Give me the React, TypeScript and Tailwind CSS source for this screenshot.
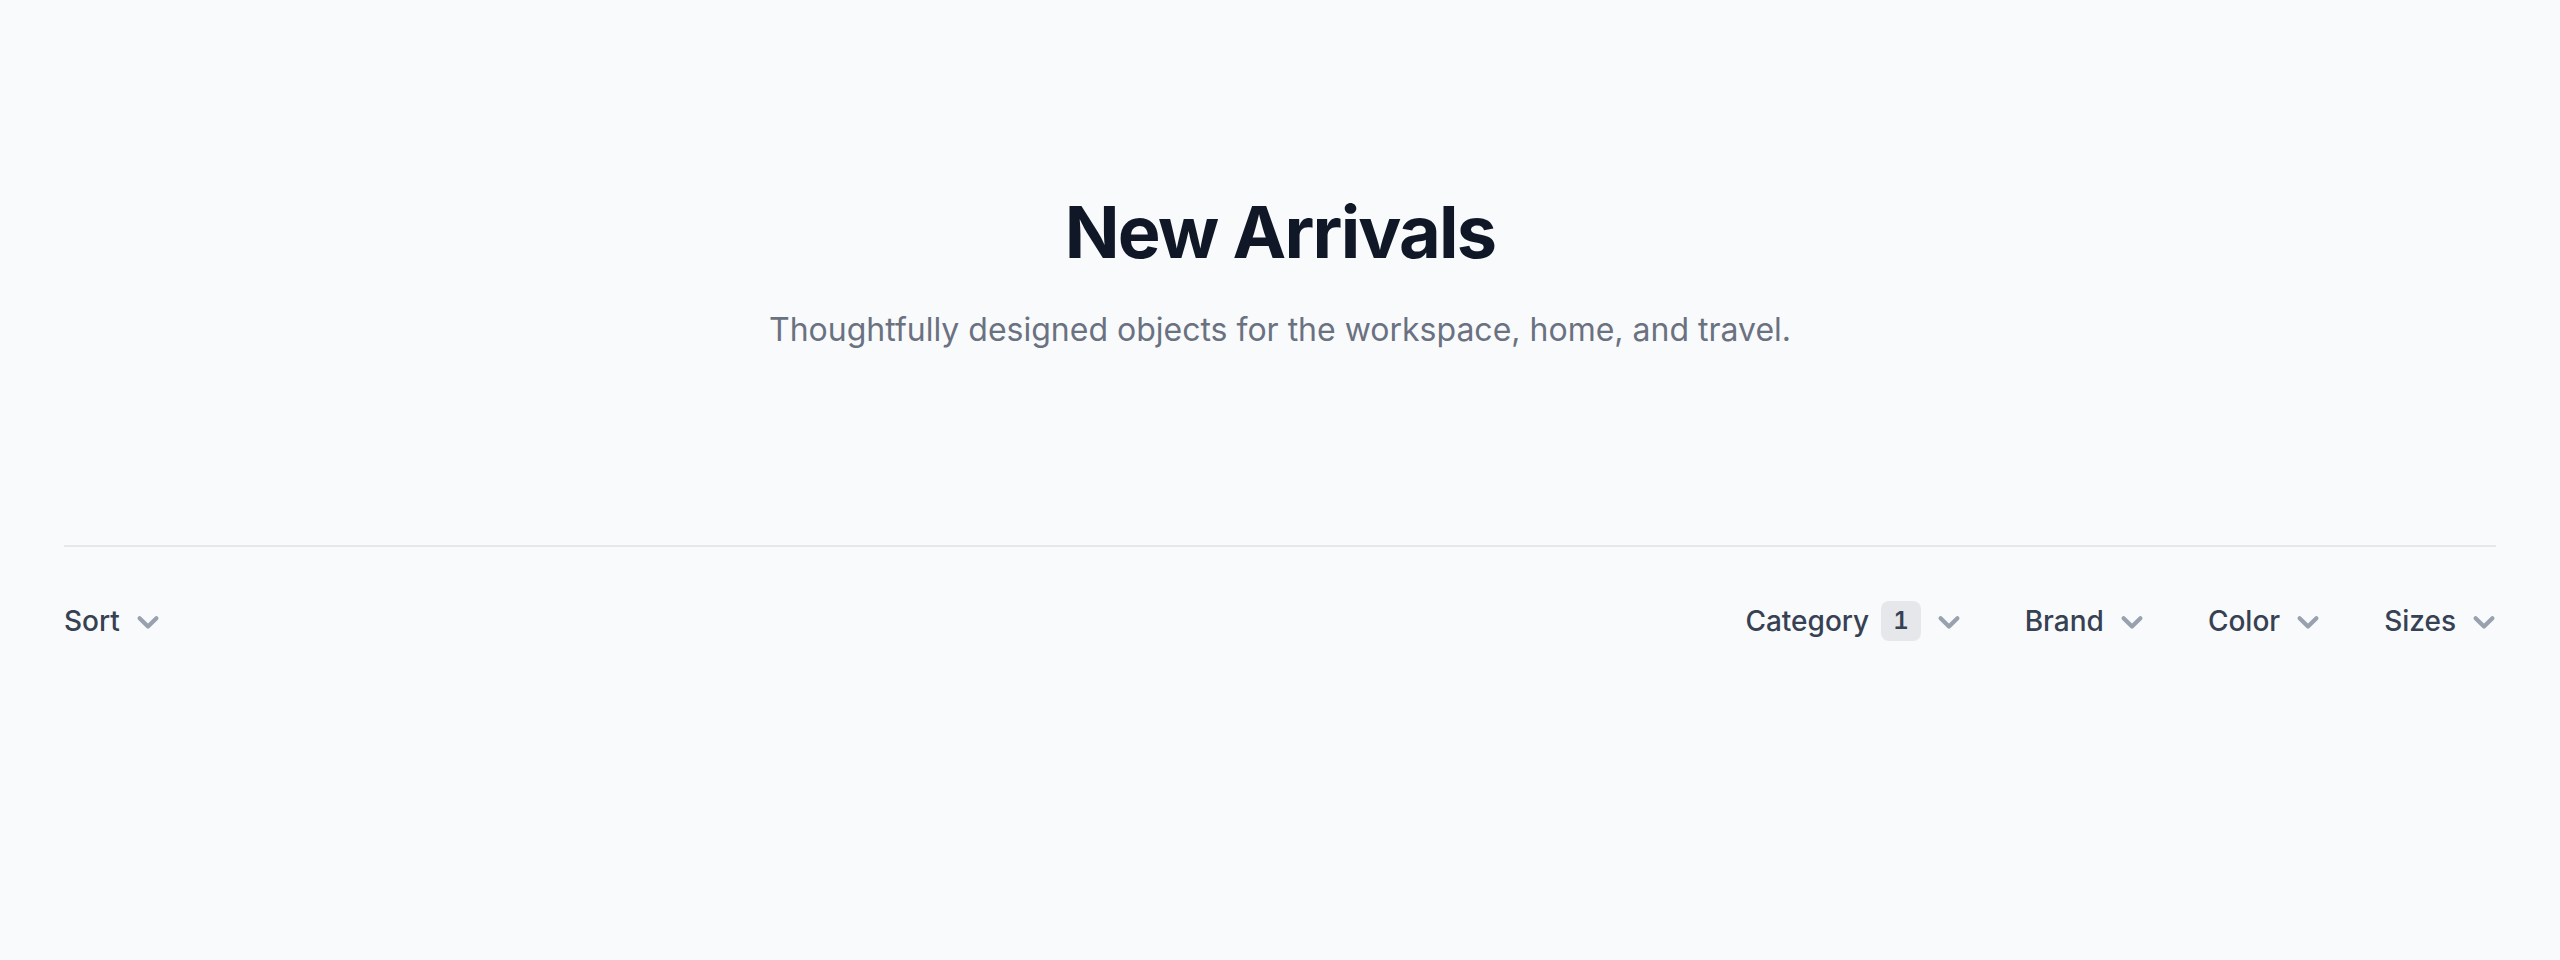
import React from "react";

const filters = [
  { name: "Category", count: 1 },
  { name: "Brand" },
  { name: "Color" },
  { name: "Sizes" },
];

const Chevron: React.FC = () => (
  <svg
    viewBox="0 0 20 20"
    fill="none"
    stroke="currentColor"
    strokeWidth={2.1}
    strokeLinecap="round"
    strokeLinejoin="round"
    className="ml-2 -mr-2 h-10 w-10 shrink-0 text-gray-400"
    aria-hidden="true"
  >
    <path d="M5.8 8.6 10 12.8l4.2-4.2" />
  </svg>
);

const App: React.FC = () => {
  return (
    <div
      className="min-h-[960px] bg-gray-50"
      style={{ fontFamily: "Inter, 'Noto Sans', sans-serif" }}
    >
      <div className="px-16 pt-[192px] text-center">
        <h1 className="text-[72px] leading-[80px] font-bold tracking-tight text-gray-900">
          New Arrivals
        </h1>
        <p className="mx-auto mt-[34px] max-w-[1152px] text-[32px] leading-[48px] text-gray-500">
          Thoughtfully designed objects for the workspace, home, and travel.
        </p>
      </div>

      <section className="mx-16 mt-[191px] border-t-2 border-gray-200 pt-[54px]">
        <div className="flex items-center justify-between">
          <button className="flex items-center text-[28px] leading-[40px] font-medium text-gray-700">
            Sort
            <Chevron />
          </button>

          <div className="-mx-8 flex items-center">
            {filters.map((f) => (
              <button
                key={f.name}
                className="flex items-center px-8 text-[28px] leading-[40px] font-medium text-gray-700"
              >
                <span>{f.name}</span>
                {f.count ? (
                  <span className="ml-3 rounded-lg bg-gray-200 px-3 py-1 text-[24px] leading-[32px] font-semibold tabular-nums text-gray-700">
                    {f.count}
                  </span>
                ) : null}
                <Chevron />
              </button>
            ))}
          </div>
        </div>
      </section>
    </div>
  );
};

export default App;
